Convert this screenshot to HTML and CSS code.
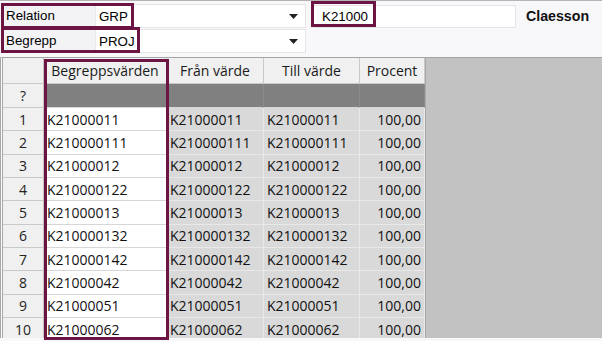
FILE: index.html
```html
<!DOCTYPE html>
<html lang="sv">
<head>
<meta charset="utf-8">
<title>Relation</title>
<link rel="stylesheet" href="styles.css">
</head>
<body>
<div class="page">
  <div class="form">
    <div class="row">
      <div class="label">Relation</div>
      <div class="select"><span>GRP</span><svg class="caret" width="9" height="5" viewBox="0 0 9 5"><path d="M0 0H9L4.5 5Z" fill="#222"/></svg></div>
      <div class="textbox">K21000</div>
      <div class="name">Claesson</div>
    </div>
    <div class="row row2">
      <div class="label">Begrepp</div>
      <div class="select"><span>PROJ</span><svg class="caret" width="9" height="5" viewBox="0 0 9 5"><path d="M0 0H9L4.5 5Z" fill="#222"/></svg></div>
    </div>
  </div>
  <div class="gridarea">
    <div class="grid">
      <div class="c hd rh"></div>
      <div class="c hd">Begreppsvärden</div>
      <div class="c hd">Från värde</div>
      <div class="c hd">Till värde</div>
      <div class="c hd">Procent</div>

      <div class="c rh">?</div>
      <div class="c new"></div>
      <div class="c new"></div>
      <div class="c new"></div>
      <div class="c new"></div>

      <div class="c rh">1</div><div class="c w">K21000011</div><div class="c g">K21000011</div><div class="c g">K21000011</div><div class="c g num">100,00</div>
      <div class="c rh">2</div><div class="c w">K210000111</div><div class="c g">K210000111</div><div class="c g">K210000111</div><div class="c g num">100,00</div>
      <div class="c rh">3</div><div class="c w">K21000012</div><div class="c g">K21000012</div><div class="c g">K21000012</div><div class="c g num">100,00</div>
      <div class="c rh">4</div><div class="c w">K210000122</div><div class="c g">K210000122</div><div class="c g">K210000122</div><div class="c g num">100,00</div>
      <div class="c rh">5</div><div class="c w">K21000013</div><div class="c g">K21000013</div><div class="c g">K21000013</div><div class="c g num">100,00</div>
      <div class="c rh">6</div><div class="c w">K210000132</div><div class="c g">K210000132</div><div class="c g">K210000132</div><div class="c g num">100,00</div>
      <div class="c rh">7</div><div class="c w">K210000142</div><div class="c g">K210000142</div><div class="c g">K210000142</div><div class="c g num">100,00</div>
      <div class="c rh">8</div><div class="c w">K21000042</div><div class="c g">K21000042</div><div class="c g">K21000042</div><div class="c g num">100,00</div>
      <div class="c rh">9</div><div class="c w">K21000051</div><div class="c g">K21000051</div><div class="c g">K21000051</div><div class="c g num">100,00</div>
      <div class="c rh">10</div><div class="c w">K21000062</div><div class="c g">K21000062</div><div class="c g">K21000062</div><div class="c g num">100,00</div>
    </div>
    <div class="blank"></div>
  </div>

  <div class="mark mark-rel"></div>
  <div class="mark mark-beg"></div>
  <div class="mark mark-k"></div>
  <div class="mark mark-col"></div>
</div>
</body>
</html>
```

FILE: styles.css
```css
html, body {
  margin: 0;
  padding: 0;
  background: #f8f8fa;
}

.page {
  position: relative;
  width: 602px;
  height: 341px;
  overflow: hidden;
  border-top: 1px solid #b4b4b4;
  box-sizing: border-box;
  font-family: "Liberation Sans", Arial, sans-serif;
  font-size: 13.33px;
  color: #000;
}

.form {
  padding: 3px 0 4px 3px;
}

.row {
  display: flex;
  align-items: center;
  height: 24px;
}

.row2 {
  margin-top: 1px;
}

.label {
  box-sizing: border-box;
  width: 92px;
  height: 24px;
  padding-left: 3px;
  display: flex;
  align-items: center;
  background: #f3f2f5;
  border-bottom: 1px solid #e6e4e8;
}

.select {
  box-sizing: border-box;
  width: 211px;
  height: 24px;
  padding: 0 6px 0 3px;
  display: flex;
  align-items: center;
  justify-content: space-between;
  background: #fff;
  border: 1px solid #e4e4e6;
  border-left: 1px solid #e8e8ea;
}

.caret {
  display: block;
  margin-right: 1px;
}

.textbox {
  box-sizing: border-box;
  width: 203px;
  height: 23px;
  margin-left: 7px;
  padding-left: 8px;
  display: flex;
  align-items: center;
  background: #fff;
  border: 1px solid #e4e4e6;
}

.name {
  margin-left: 10px;
  font-size: 14.2px;
  font-weight: bold;
  color: #111;
}

.gridarea {
  display: flex;
  height: 281px;
  overflow: hidden;
}

.grid {
  display: grid;
  grid-template-columns: 41px 123px 97px 96px 65px;
  grid-template-rows: 26px 24px repeat(10, 23.33px);
  border-left: 3px double #a9a9a9;
  border-top: 1px solid #a5a5a5;
  font-family: "Open Sans", "Noto Sans", sans-serif;
  font-size: 14px;
  color: #111;
}

.c {
  box-sizing: border-box;
  display: flex;
  align-items: center;
  padding-left: 3px;
  border-right: 1px solid #e6e6e6;
  border-bottom: 1px solid #e6e6e6;
  white-space: nowrap;
  overflow: hidden;
}

.hd {
  justify-content: center;
  padding-left: 0;
  background: #f0f0f0;
  border-right: 1px solid #c9c9c9;
  border-bottom: 1px solid #c9c9c9;
  color: #1a1a1a;
}

.rh {
  justify-content: center;
  padding-left: 0;
  background: #f0f0f0;
  border-right: 1px solid #c4c4c4;
  border-bottom: 1px solid #c9c9c9;
  color: #222;
}

.new {
  background: #808080;
  border-right: 1px solid #8c8c8c;
  border-bottom: 1px solid #d8d8d8;
}

.w {
  background: #fff;
  border-right: 1px solid #d6d6d6;
  border-bottom: 1px solid #d6d6d6;
}

.g {
  background: #d9d9d9;
  border-right: 1px solid #e8e8e8;
  border-bottom: 1px solid #e8e8e8;
}

.num {
  justify-content: flex-end;
  padding-left: 0;
  padding-right: 3px;
}

.blank {
  flex: 1;
  background: #c2c2c2;
  border-left: 1px solid #a8a8a8;
  border-top: 1px solid #a5a5a5;
}

.mark {
  position: absolute;
  box-sizing: border-box;
  border: 3px solid #6c1442;
}

.mark-rel {
  left: 1px;
  top: 2px;
  width: 133px;
  height: 26px;
}

.mark-beg {
  left: 1px;
  top: 26px;
  width: 139px;
  height: 26px;
}

.mark-k {
  left: 311px;
  top: 0;
  width: 65px;
  height: 26px;
}

.mark-col {
  left: 44px;
  top: 58px;
  width: 125px;
  height: 281px;
}
```
